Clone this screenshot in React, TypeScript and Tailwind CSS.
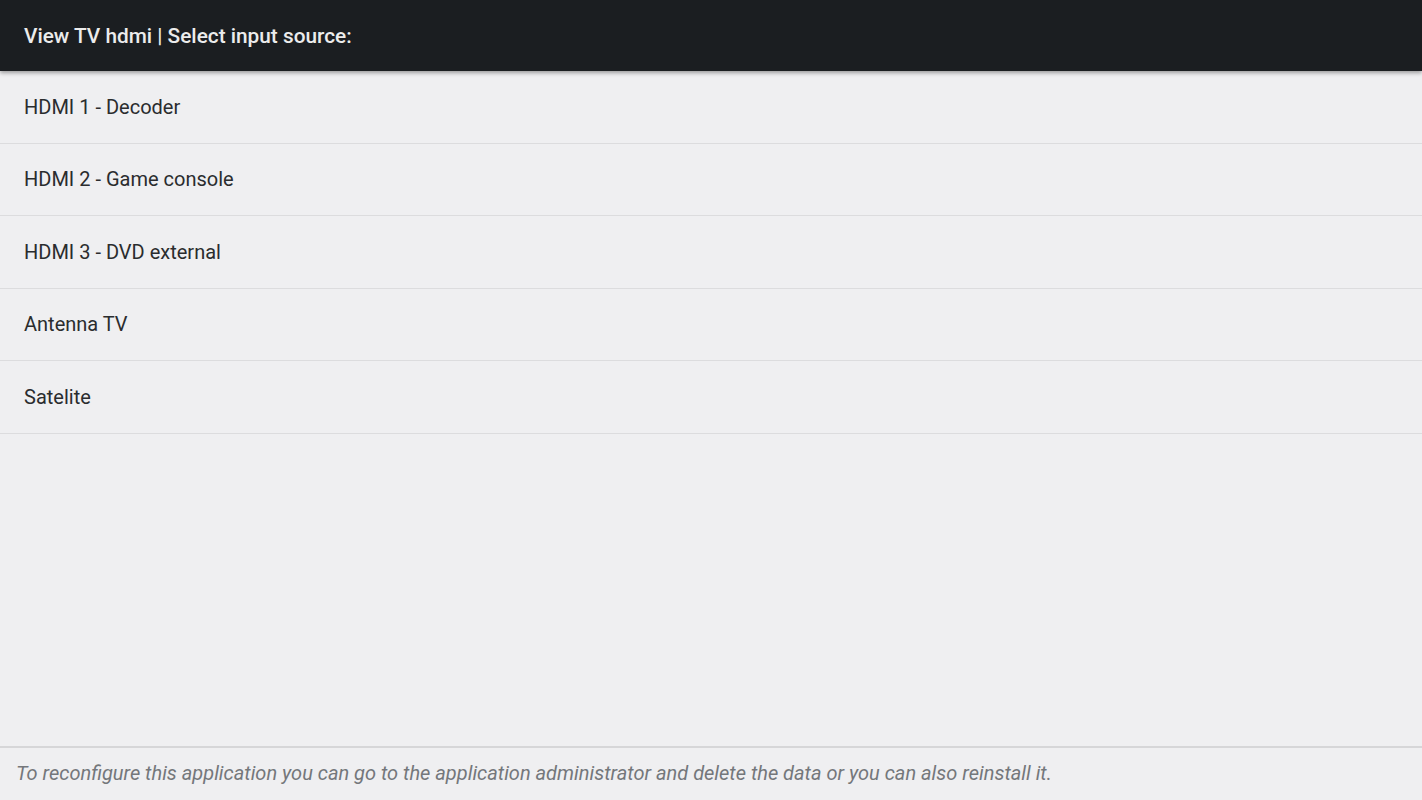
import React from "react";

const sources = ["HDMI 1 - Decoder", "HDMI 2 - Game console", "HDMI 3 - DVD external", "Antenna TV", "Satelite"];

export default function App() {
  return (
    <div className="flex h-[800px] w-full flex-col bg-[#efeff1] font-['Roboto',sans-serif]">
      <header className="relative z-10 flex h-[71px] shrink-0 items-center bg-[#1b1e21] px-6 pt-[2px] shadow-[0_2px_4px_rgba(0,0,0,0.35)]">
        <h1 className="text-[20.8px] font-medium text-[#ececec]">View TV hdmi | Select input source:</h1>
      </header>
      <ul className="flex-1">
        {sources.map((s) => (
          <li key={s} className="flex h-[72.5px] items-center border-b border-[#dcdcde] px-6 text-[20px] text-[#2a2c2e]">
            {s}
          </li>
        ))}
      </ul>
      <footer className="flex h-[54px] shrink-0 items-center border-t-2 border-[#d6d6d8] px-4 pb-[2px]">
        <p className="text-[20px] italic text-[#74777b]">
          To reconfigure this application you can go to the application administrator and delete the data or you can also reinstall it.
        </p>
      </footer>
    </div>
  );
}
